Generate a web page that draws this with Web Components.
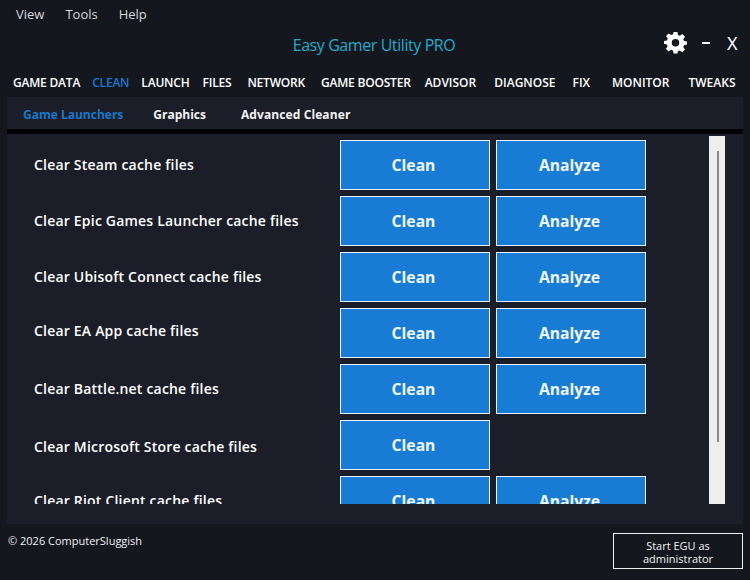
<!DOCTYPE html>
<html>
<head>
<meta charset="utf-8">
<style>
  html, body { margin: 0; padding: 0; background: #14171e; }
  body { width: 750px; height: 580px; overflow: hidden; font-family: "Open Sans", "Noto Sans", sans-serif; }
</style>
</head>
<body>
<egu-app></egu-app>

<script>
class eguTitlebar extends HTMLElement {
  constructor() {
    super();
    this.shadowDOM = this.attachShadow({mode: 'open'});
    this.shadowDOM.innerHTML = `
    <style>
    :host { display: block; height: 69px; position: relative; color: #fff; }
    #menu { display: flex; gap: 21px; padding: 5px 0 0 16px; font-size: 13px; line-height: 19px; color: #d6d8da; }
    #row { display: flex; justify-content: center; padding-top: 10px; }
    #title { font-size: 16px; line-height: 22px; color: #25abcb; letter-spacing: -0.42px; margin-right: 2px; }
    #controls { position: absolute; left: 664px; top: 31px; display: flex; align-items: center; }
    svg { display: block; width: 23px; height: 23px; }
    #min { margin-left: 15px; width: 8px; height: 2px; background: #fff; }
    #close { margin-left: 17px; font-size: 18px; line-height: 22px; font-family: "Noto Sans", sans-serif; }
    </style>
    <div id="menu"><span>View</span><span>Tools</span><span>Help</span></div>
    <div id="row"><span id="title">Easy Gamer Utility PRO</span></div>
    <div id="controls">
      <svg viewBox="0 0 24 24"><path fill="#fff" fill-rule="evenodd" d="M10 1h4l.6 3.1 1.9.8L19.200 3.100 22 5.900 20.100 8.600l.8 1.900L24 11v3.200l-3.100.6-.8 1.900 1.800 2.700-2.800 2.800-2.700-1.800-1.900.8L14 23.500h-4l-.6-3.100-1.900-.8-2.700 1.800L2 18.600l1.800-2.700-.8-1.900L0 13.400V10.400l3.100-.6.800-1.900L2.100 5.300 4.900 2.500l2.700 1.800 1.900-.8zM12 8.300a3.900 3.900 0 1 0 0 7.800 3.900 3.900 0 0 0 0-7.800z"/></svg>
      <div id="min"></div>
      <div id="close">X</div>
    </div>`;
  }
}
customElements.define('egu-titlebar', eguTitlebar);

class eguNav extends HTMLElement {
  constructor() {
    super();
    this.shadowDOM = this.attachShadow({mode: 'open'});
    // the gaps in the app are uneven, so each item carries its own
    const items = [['GAME DATA',0],['CLEAN',12],['LAUNCH',12],['FILES',13],['NETWORK',16],['GAME BOOSTER',16],['ADVISOR',14,1],['DIAGNOSE',18,1],['FIX',17,1],['MONITOR',22,1],['TWEAKS',19,1]];
    this.shadowDOM.innerHTML = `
    <style>
    :host { display: block; height: 28px; }
    #nav { display: flex; padding-left: 13px; font-size: 12px; line-height: 28px; font-weight: 600; color: #fff; letter-spacing: -0.2px; white-space: nowrap; }
    .active { color: #1a78c8; }
    .wide { letter-spacing: 0; }
    </style>
    <div id="nav">${items.map(i => `<span class="${i[0] === 'CLEAN' ? 'active' : ''} ${i[2] ? 'wide' : ''}" style="margin-left:${i[1]}px">${i[0]}</span>`).join('')}</div>`;
  }
}
customElements.define('egu-nav', eguNav);

class eguTabs extends HTMLElement {
  constructor() {
    super();
    this.shadowDOM = this.attachShadow({mode: 'open'});
    this.shadowDOM.innerHTML = `
    <style>
    :host { display: block; height: 32px; border-bottom: 5px solid #000; }
    #tabs { display: flex; padding-left: 16px; font-size: 12px; line-height: 36px; font-weight: 700; color: #f4f4f4; }
    .active { color: #1a78c8; margin-right: 30px; }
    .mid { margin-right: 35px; }
    .last { letter-spacing: 0.1px; }
    </style>
    <div id="tabs"><span class="active">Game Launchers</span><span class="mid">Graphics</span><span class="last">Advanced Cleaner</span></div>`;
  }
}
customElements.define('egu-tabs', eguTabs);

class eguRow extends HTMLElement {
  constructor() {
    super();
    this.shadowDOM = this.attachShadow({mode: 'open'});
  }

  connectedCallback() {
    const shift = parseInt(this.getAttribute('shift') || '0', 10);
    const analyze = this.hasAttribute('analyze');
    this.shadowDOM.innerHTML = `
    <style>
    :host { display: flex; height: 50px; }
    #label { width: 306px; padding-left: 27px; flex: none; font-size: 14px; font-weight: 600; line-height: 19px; color: #fff; margin-top: ${15 + shift}px; letter-spacing: 0.2px; }
    button { width: 150px; height: 50px; box-sizing: border-box; margin: 0 6px 0 0; padding: 0 3px 0 0; border: 1px solid #e8f2fa; border-radius: 0; background: #187cd4; color: #f0f6fb; font-family: inherit; font-size: 15.7px; font-weight: 700; }
    </style>
    <div id="label"><slot></slot></div>
    <button>Clean</button>
    ${analyze ? '<button>Analyze</button>' : ''}`;
  }
}
customElements.define('egu-row', eguRow);

class eguList extends HTMLElement {
  constructor() {
    super();
    this.shadowDOM = this.attachShadow({mode: 'open'});
    this.shadowDOM.innerHTML = `
    <style>
    :host { display: block; height: 370px; position: relative; overflow: hidden; }
    #rows { display: flex; flex-direction: column; gap: 6px; padding-top: 6px; }
    #bar { position: absolute; left: 702px; top: 2px; width: 16px; height: 368px; background: #eeeeec; }
    #thumb { position: absolute; left: 8px; top: 15px; width: 2px; height: 291px; background: #8b8b8b; }
    </style>
    <div id="rows"><slot></slot></div>
    <div id="bar"><div id="thumb"></div></div>`;
  }
}
customElements.define('egu-list', eguList);

class eguFooter extends HTMLElement {
  constructor() {
    super();
    this.shadowDOM = this.attachShadow({mode: 'open'});
    this.shadowDOM.innerHTML = `
    <style>
    :host { display: flex; justify-content: space-between; align-items: flex-start; padding: 9px 7px 0 8px; color: #f0f0f0; }
    #copy { font-size: 11px; line-height: 16px; }
    #admin { width: 130px; height: 36px; box-sizing: border-box; border: 1px solid #f0f0f0; font-size: 11px; line-height: 13px; text-align: center; padding-top: 5px; }
    </style>
    <div id="copy">&copy; 2026 ComputerSluggish</div>
    <div id="admin">Start EGU as<br>administrator</div>`;
  }
}
customElements.define('egu-footer', eguFooter);

class eguApp extends HTMLElement {
  constructor() {
    super();
    this.shadowDOM = this.attachShadow({mode: 'open'});
    this.shadowDOM.innerHTML = `
    <style>
    :host { display: block; width: 750px; height: 580px; background: #14171e; }
    #panel { margin: 0 7px; height: 427px; background: #1b1e28; }
    </style>
    <egu-titlebar></egu-titlebar>
    <egu-nav></egu-nav>
    <div id="panel">
      <egu-tabs></egu-tabs>
      <egu-list>
        <egu-row analyze>Clear Steam cache files</egu-row>
        <egu-row analyze>Clear Epic Games Launcher cache files</egu-row>
        <egu-row analyze>Clear Ubisoft Connect cache files</egu-row>
        <egu-row analyze shift="-2">Clear EA App cache files</egu-row>
        <egu-row analyze>Clear Battle.net cache files</egu-row>
        <egu-row shift="2">Clear Microsoft Store cache files</egu-row>
        <egu-row analyze>Clear Riot Client cache files</egu-row>
      </egu-list>
    </div>
    <egu-footer></egu-footer>`;
  }
}
customElements.define('egu-app', eguApp);
</script>
</body>
</html>
